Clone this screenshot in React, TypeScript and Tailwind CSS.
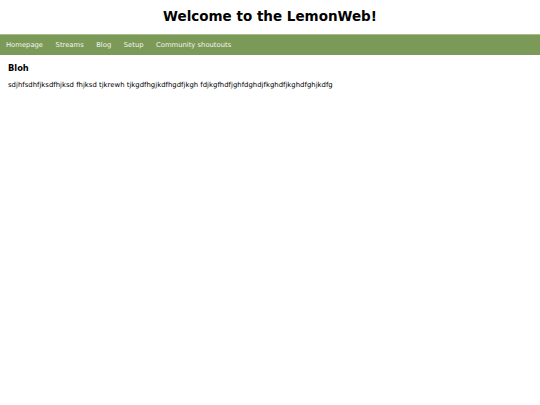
export default function App() {
  const links = ["Homepage", "Streams", "Blog", "Setup", "Community shoutouts"];
  return (
    <div className="min-h-screen bg-white text-black font-['DejaVu_Sans',Verdana,sans-serif]">
      <header className="h-[34px] flex items-center justify-center">
        <h1 className="text-[13.5px] font-bold leading-none">Welcome to the LemonWeb!</h1>
      </header>
      <nav className="h-[21px] bg-[#7b9a58] border-t border-[#a6bd8c] flex items-center gap-[12.5px] px-[6px]">
        {links.map((l) => (
          <a key={l} className="text-[6.8px] text-[#f2f5ee] leading-none">
            {l}
          </a>
        ))}
      </nav>
      <main className="px-[8px] pt-[9px]">
        <h2 className="text-[8.3px] font-bold leading-none">Bloh</h2>
        <p className="mt-[10px] text-[6.9px] leading-none">
          sdjhfsdhfjksdfhjksd fhjksd tjkrewh tjkgdfhgjkdfhgdfjkgh fdjkgfhdfjghfdghdjfkghdfjkghdfghjkdfg
        </p>
      </main>
    </div>
  );
}
